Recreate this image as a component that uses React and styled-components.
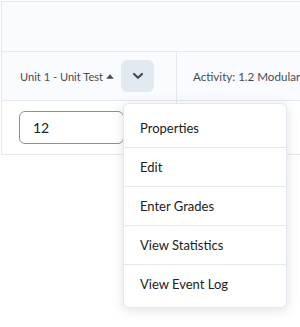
import React from 'react'
import styled, { createGlobalStyle } from 'styled-components'

const Global = createGlobalStyle`
  html, body { margin: 0; background: #fff; }
  body { font-family: Lato, "Open Sans", sans-serif; color: #494c4e; }
`

const Page = styled.div`
  position: relative;
  width: 300px;
  height: 327px;
  overflow: hidden;
  padding: 1px 0 0 1px;
  box-sizing: border-box;
`

const Table = styled.div`
  width: 420px;
  border-top: 1px solid #e3e9f1;
  border-left: 1px solid #e3e9f1;
`

const Row = styled.div`
  display: flex;
  height: ${p => p.h}px;
  background: ${p => (p.head ? '#f9fbff' : '#fff')};
  border-bottom: 1px solid #e3e9f1;
`

const Cell = styled.div`
  display: flex;
  align-items: center;
  box-sizing: border-box;
  width: ${p => (p.w ? `${p.w}px` : 'auto')};
  flex: ${p => (p.w ? 'none' : '1')};
  padding-left: ${p => p.pl || 0}px;
  border-right: ${p => (p.divider ? '1px solid #e3e9f1' : 'none')};
  font-size: ${p => p.fs || 11.6}px;
  white-space: nowrap;
`

const Sort = styled.svg`
  margin-left: 3px;
  margin-right: 7px;
`

const MenuButton = styled.button`
  width: 33px;
  height: 32px;
  border: none;
  border-radius: 6px;
  background: #e3e9f1;
  display: flex;
  align-items: center;
  justify-content: center;
  padding: 0;
`

const Input = styled.div`
  box-sizing: border-box;
  width: 105px;
  height: 33px;
  border: 1px solid #8a9095;
  border-radius: 6px;
  padding-left: 13px;
  display: flex;
  align-items: center;
  font-size: 14px;
  color: #202122;
`

const Menu = styled.ul`
  position: absolute;
  left: 123px;
  top: 103px;
  width: 164px;
  margin: 0;
  padding: 4px 0;
  list-style: none;
  background: #fff;
  border: 1px solid #e3e9f1;
  border-radius: 6px;
  box-shadow: 0 2px 12px rgba(86, 90, 92, 0.18);
  box-sizing: border-box;
`

const Item = styled.li`
  box-sizing: border-box;
  height: 39px;
  display: flex;
  align-items: center;
  padding-left: 16px;
  font-size: 13px;
  color: #202122;
  border-top: ${p => (p.first ? 'none' : '1px solid #e3e9f1')};
`

const items = ['Properties', 'Edit', 'Enter Grades', 'View Statistics', 'View Event Log']

export default function App() {
  return (
    <Page>
      <Global />
      <Table>
        <Row h={49} head />
        <Row h={48} head>
          <Cell w={175} pl={18} fs={11.1} divider>
            Unit 1 - Unit Test
            <Sort width="8" height="5" viewBox="0 0 8 5">
              <path d="M4 0.3 L7.8 4.8 L0.2 4.8 Z" fill="#494c4e" />
            </Sort>
            <MenuButton>
              <svg width="12" height="8" viewBox="0 0 12 8">
                <path d="M2 2 L6 5.8 L10 2" stroke="#494c4e" strokeWidth="2.2" fill="none" strokeLinecap="round" strokeLinejoin="round" />
              </svg>
            </MenuButton>
          </Cell>
          <Cell pl={16}>Activity: 1.2 Modular</Cell>
        </Row>
        <Row h={53}>
          <Cell w={175} pl={17} divider>
            <Input>12</Input>
          </Cell>
          <Cell />
        </Row>
      </Table>
      <Menu>
        {items.map((t, i) => (
          <Item key={t} first={i === 0}>{t}</Item>
        ))}
      </Menu>
    </Page>
  )
}
